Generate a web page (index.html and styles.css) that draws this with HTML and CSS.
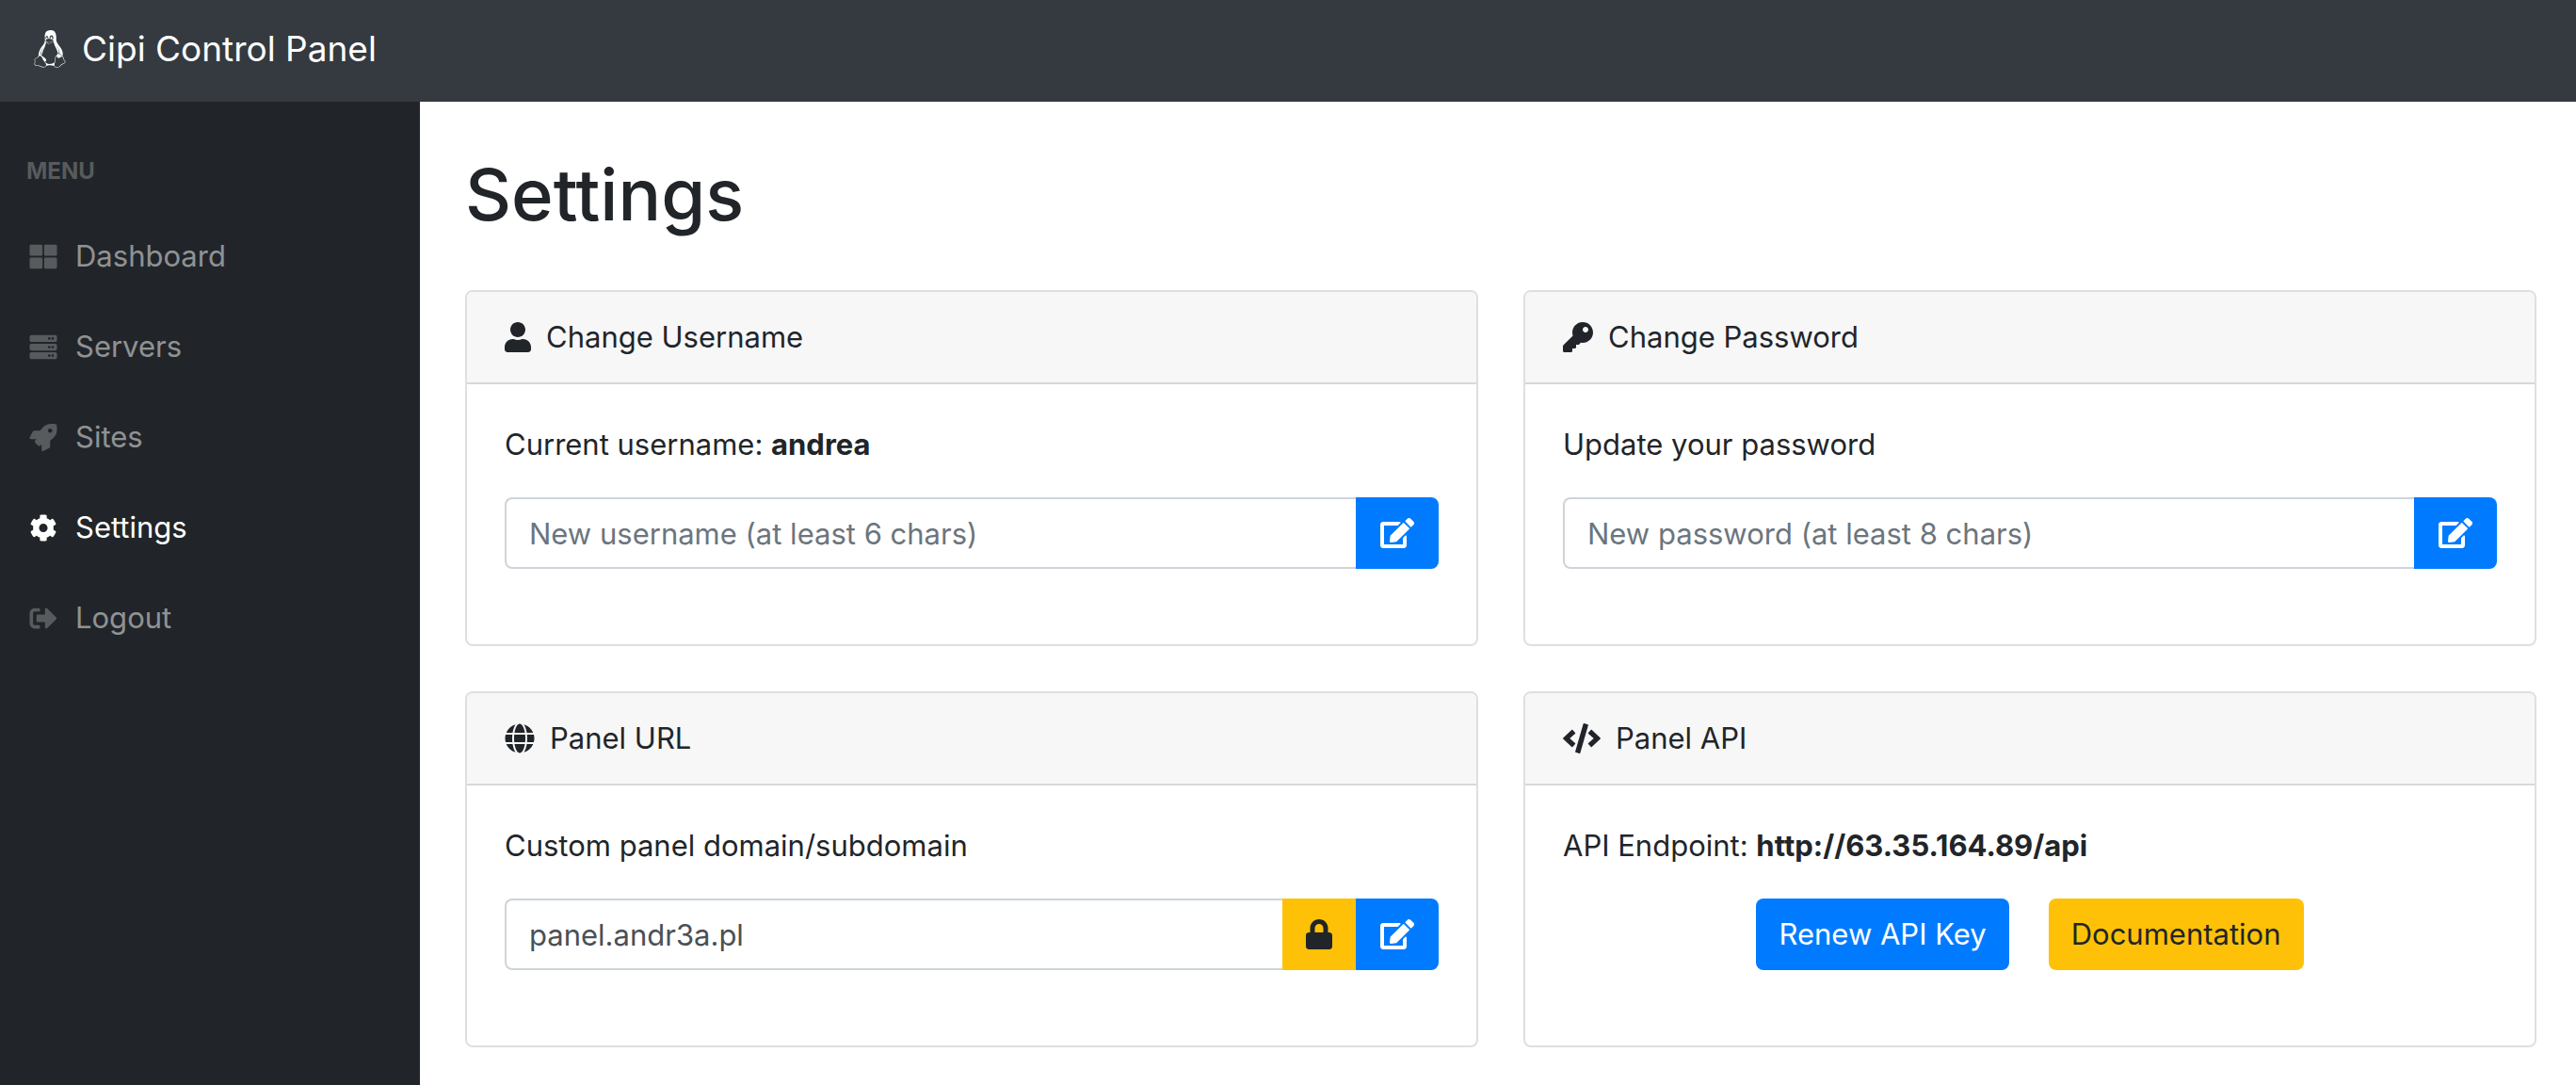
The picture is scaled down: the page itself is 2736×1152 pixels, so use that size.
FILE: index.html
```html
<!DOCTYPE html>
<html lang="en">
<head>
    <meta charset="UTF-8">
    <meta name="viewport" content="width=device-width, initial-scale=1.0">
    <title>Cipi Control Panel</title>
    <link rel="stylesheet" href="styles.css">
</head>
<body>
    <!-- Icons -->
    <svg class="sprite" aria-hidden="true">
        <symbol id="linux" viewBox="0 0 448 512"><path fill-rule="evenodd" d="M220.8 123.3c1 .5 1.8 1.7 3 1.7 1.1 0 2.8-.4 2.9-1.5.2-1.4-1.9-2.3-3.2-2.9-1.7-.7-3.9-1-5.5-.1-.4.2-.8.7-.6 1.1.3 1.3 2.3 1.1 3.4 1.7zm-21.9 1.7c1.2 0 2-1.2 3-1.7 1.1-.6 3.1-.4 3.5-1.6.2-.4-.2-.9-.6-1.1-1.6-.9-3.8-.6-5.5.1-1.3.6-3.4 1.5-3.2 2.9.1 1 1.8 1.5 2.8 1.4zM420 403.8c-3.6-4-5.3-11.6-7.2-19.7-1.8-8.1-3.9-16.8-10.5-22.4-1.3-1.1-2.6-2.1-4-2.9-1.3-.8-2.7-1.5-4.1-2 9.2-27.3 5.6-54.5-3.7-79.1-11.4-30.1-31.3-56.4-46.5-74.4-17.1-21.5-33.7-41.9-33.4-72C311.1 85.4 315.7.1 234.8 0 132.4-.2 158 103.4 156.9 135.2c-1.7 23.4-6.4 41.8-22.5 64.7-18.9 22.5-45.5 58.8-58.1 96.7-6 17.9-8.8 36.1-6.2 53.3-6.5 5.8-11.4 14.7-16.6 20.2-4.2 4.3-10.3 5.9-17 8.3s-14 6-18.5 14.5c-2.1 3.9-2.8 8.1-2.8 12.4 0 3.9.6 7.9 1.2 11.8 1.2 8.1 2.5 15.7.8 20.8-5.2 14.4-5.9 24.4-2.2 31.7 3.8 7.3 11.4 10.5 20.1 12.3 17.3 3.6 40.8 2.7 59.3 12.5 19.8 10.4 39.9 14.1 55.9 10.4 11.6-2.6 21.1-9.6 25.9-20.2 12.5-.1 26.3-5.4 48.3-6.6 14.9-1.2 33.6 5.3 55.1 4.1.6 2.3 1.4 4.6 2.5 6.7v.1c8.3 16.7 23.8 24.3 40.3 23 16.6-1.3 34.1-11 48.3-27.9 13.6-16.4 36-23.2 50.9-32.2 7.4-4.5 13.4-10.1 13.9-18.3.4-8.2-4.4-17.3-15.5-29.7zM223.7 87.3c9.8-22.2 34.2-21.8 44-.4 6.5 14.2 3.6 30.9-4.3 40.4-1.6-.8-5.9-2.6-12.6-4.9 1.1-1.2 3.1-2.7 3.9-4.6 4.8-11.8-.2-27-9.1-27.3-7.3-.5-13.9 10.8-11.8 23-4.1-2-9.4-3.5-13-4.4-1-6.9-.3-14.6 2.9-21.8zM183 75.8c10.1 0 20.8 14.2 19.1 33.5-3.5 1-7.1 2.5-10.2 4.6 1.2-8.9-3.3-20.1-9.6-19.6-8.4.7-9.8 21.2-1.8 28.1 1 .8 1.9-.2-5.9 5.5-15.6-14.6-10.5-52.1 8.4-52.1zm-13.6 60.7c6.2-4.6 13.6-10 14.1-10.5 4.7-4.4 13.5-14.2 27.9-14.2 7.1 0 15.6 2.3 25.9 8.9 6.3 4.1 11.3 4.4 22.6 9.3 8.4 3.5 13.7 9.7 10.5 18.2-2.6 7.1-11 14.4-22.7 18.1-11.1 3.6-19.8 16-38.2 14.9-3.9-.2-7-1-9.6-2.1-8-3.5-12.2-10.4-20-15-8.6-4.8-13.2-10.4-14.7-15.3-1.4-4.9 0-9 4.2-12.3zm3.3 334c-2.7 35.1-43.9 34.4-75.3 18-29.9-15.8-68.6-6.5-76.5-21.9-2.4-4.7-2.4-12.7 2.6-26.4v-.2c2.4-7.6.6-16-.6-23.9-1.2-7.8-1.8-15 .9-20 3.5-6.7 8.5-9.1 14.8-11.3 10.3-3.7 11.8-3.4 19.6-9.9 5.5-5.7 9.5-12.9 14.3-18 5.1-5.5 10-8.1 17.7-6.9 8.1 1.2 15.1 6.8 21.9 16l19.6 35.6c9.5 19.9 43.1 48.4 41 68.9zm-1.4-25.9c-4.1-6.6-9.6-13.6-14.4-19.6 7.1 0 14.2-2.2 16.7-8.9 2.3-6.2 0-14.9-7.4-24.9-13.5-18.2-38.3-32.5-38.3-32.5-13.5-8.4-21.1-18.7-24.6-29.9s-3-23.3-.3-35.2c5.2-22.9 18.6-45.2 27.2-59.2 2.3-1.7.8 3.2-8.7 20.8-8.5 16.1-24.4 53.3-2.6 82.4.6-20.7 5.5-41.8 13.8-61.5 12-27.4 37.3-74.9 39.3-112.7 1.1.8 4.6 3.2 6.2 4.1 4.6 2.7 8.1 6.7 12.6 10.3 12.4 10 28.5 9.2 42.4 1.2 6.2-3.5 11.2-7.5 15.9-9 9.9-3.1 17.8-8.6 22.3-15 7.7 30.4 25.7 74.3 37.2 95.7 6.1 11.4 18.3 35.5 23.6 64.6 3.3-.1 7 .4 10.9 1.4 13.8-35.7-11.7-74.2-23.3-84.9-4.7-4.6-4.9-6.6-2.6-6.5 12.6 11.2 29.2 33.7 35.2 59 2.8 11.6 3.3 23.7.4 35.7 16.4 6.8 35.9 17.9 30.7 34.8-2.2-.1-3.2 0-4.2 0 3.2-10.1-3.9-17.6-22.8-26.1-19.6-8.6-36-8.6-38.3 12.5-12.1 4.2-18.3 14.7-21.4 27.3-2.8 11.2-3.6 24.7-4.4 39.9-.5 7.7-3.6 18-6.8 29-32.1 22.9-76.7 32.9-114.3 7.2zm257.4-11.5c-.9 16.8-41.2 19.9-63.2 46.5-13.2 15.7-29.4 24.4-43.6 25.5s-26.5-4.8-33.7-19.3c-4.7-11.1-2.4-23.1 1.1-36.3 3.7-14.2 9.2-28.8 9.9-40.6.8-15.2 1.7-28.5 4.2-38.7 2.6-10.3 6.6-17.2 13.7-21.1.3-.2.7-.3 1-.5.8 13.2 7.3 26.6 18.8 29.5 12.6 3.3 30.7-7.5 38.4-16.3 9-.3 15.7-.9 22.6 5.1 9.9 8.5 7.1 30.3 17.1 41.6 10.6 11.6 14 19.5 13.7 24.6zM173.3 148.7c2 1.9 4.7 4.5 8 7.1 6.6 5.2 15.8 10.6 27.3 10.6 11.6 0 22.5-5.9 31.8-10.8 4.9-2.6 10.9-7 14.8-10.4s5.9-6.3 3.1-6.6-2.6 2.6-6 5.1c-4.4 3.2-9.7 7.4-13.9 9.8-7.4 4.2-19.5 10.2-29.9 10.2s-18.7-4.8-24.9-9.7c-3.1-2.5-5.7-5-7.7-6.9-1.5-1.4-1.9-4.6-4.3-4.9-1.4-.1-1.8 3.7 1.7 6.5z"/></symbol>
        <symbol id="th-large" viewBox="0 0 512 512"><path d="M296 32h192c13.255 0 24 10.745 24 24v160c0 13.255-10.745 24-24 24H296c-13.255 0-24-10.745-24-24V56c0-13.255 10.745-24 24-24zm-80 0H24C10.745 32 0 42.745 0 56v160c0 13.255 10.745 24 24 24h192c13.255 0 24-10.745 24-24V56c0-13.255-10.745-24-24-24zM0 296v160c0 13.255 10.745 24 24 24h192c13.255 0 24-10.745 24-24V296c0-13.255-10.745-24-24-24H24c-13.255 0-24 10.745-24 24zm296 184h192c13.255 0 24-10.745 24-24V296c0-13.255-10.745-24-24-24H296c-13.255 0-24 10.745-24 24v160c0 13.255 10.745 24 24 24z"/></symbol>
        <symbol id="server" viewBox="0 0 512 512"><path fill-rule="evenodd" d="M480 160H32c-17.673 0-32-14.327-32-32V64c0-17.673 14.327-32 32-32h448c17.673 0 32 14.327 32 32v64c0 17.673-14.327 32-32 32zm-48-88c-13.255 0-24 10.745-24 24s10.745 24 24 24 24-10.745 24-24-10.745-24-24-24zm-64 0c-13.255 0-24 10.745-24 24s10.745 24 24 24 24-10.745 24-24-10.745-24-24-24zm112 248H32c-17.673 0-32-14.327-32-32v-64c0-17.673 14.327-32 32-32h448c17.673 0 32 14.327 32 32v64c0 17.673-14.327 32-32 32zm-48-88c-13.255 0-24 10.745-24 24s10.745 24 24 24 24-10.745 24-24-10.745-24-24-24zm-64 0c-13.255 0-24 10.745-24 24s10.745 24 24 24 24-10.745 24-24-10.745-24-24-24zm112 248H32c-17.673 0-32-14.327-32-32v-64c0-17.673 14.327-32 32-32h448c17.673 0 32 14.327 32 32v64c0 17.673-14.327 32-32 32zm-48-88c-13.255 0-24 10.745-24 24s10.745 24 24 24 24-10.745 24-24-10.745-24-24-24zm-64 0c-13.255 0-24 10.745-24 24s10.745 24 24 24 24-10.745 24-24-10.745-24-24-24z"/></symbol>
        <symbol id="rocket" viewBox="0 0 512 512"><path fill-rule="evenodd" d="M505.12 19.094c-1.19-5.532-6.658-11-12.207-12.188C460.716 0 435.507 0 410.407 0 307.175 0 245.27 55.203 199.052 128H94.838c-16.348.016-35.557 11.875-42.887 26.484L2.516 253.297A28.4 28.4 0 0 0 0 264a24.009 24.009 0 0 0 24.006 24h103.81l-22.474 22.469c-11.366 11.36-12.996 32.258 0 45.25l50.904 50.906c11.156 11.188 32.156 13.156 45.277 0l22.475-22.469V488a24.009 24.009 0 0 0 24.006 24 28.56 28.56 0 0 0 10.707-2.516l98.728-49.39c14.629-7.297 26.508-26.5 26.508-42.86V312.797c72.598-46.313 128.035-108.406 128.035-211.094.093-25.203.093-50.406-6.862-82.61zM384.04 168A40 40 0 1 1 424.05 128 40.023 40.023 0 0 1 384.04 168z"/></symbol>
        <symbol id="cog" viewBox="0 0 512 512"><path d="M487.4 315.7l-42.6-24.6c4.3-23.2 4.3-47 0-70.2l42.6-24.6c4.9-2.8 7.1-8.6 5.5-14-11.1-35.6-30-67.8-54.7-94.6-3.8-4.1-10-5.1-14.8-2.3L380.8 110c-17.9-15.4-38.5-27.3-60.8-35.1V25.8c0-5.6-3.9-10.5-9.4-11.7-36.7-8.2-74.3-7.8-109.2 0-5.5 1.2-9.4 6.1-9.4 11.7V75c-22.2 7.9-42.8 19.8-60.8 35.1L88.7 85.5c-4.9-2.8-11-1.9-14.8 2.3-24.7 26.7-43.6 58.9-54.7 94.6-1.7 5.4.6 11.2 5.5 14L67.3 221c-4.3 23.2-4.3 47 0 70.2l-42.6 24.6c-4.9 2.8-7.1 8.6-5.5 14 11.1 35.6 30 67.8 54.7 94.6 3.8 4.1 10 5.1 14.8 2.3l42.6-24.6c17.9 15.4 38.5 27.3 60.8 35.1v49.2c0 5.6 3.9 10.5 9.4 11.7 36.7 8.2 74.3 7.8 109.2 0 5.5-1.2 9.4-6.1 9.4-11.7v-49.2c22.2-7.9 42.8-19.8 60.8-35.1l42.6 24.6c4.9 2.8 11 1.9 14.8-2.3 24.7-26.7 43.6-58.9 54.7-94.6 1.5-5.5-.7-11.3-5.6-14.1zM256 336c-44.1 0-80-35.9-80-80s35.9-80 80-80 80 35.9 80 80-35.9 80-80 80z"/></symbol>
        <symbol id="sign-out" viewBox="0 0 512 512"><path d="M497 273L329 441c-15 15-41 4.5-41-17v-96H152c-13.3 0-24-10.7-24-24v-96c0-13.3 10.7-24 24-24h136V88c0-21.4 25.9-32 41-17l168 168c9.3 9.4 9.3 24.6 0 34zM192 436v-40c0-6.6-5.4-12-12-12H96c-17.7 0-32-14.3-32-32V160c0-17.7 14.3-32 32-32h84c6.6 0 12-5.4 12-12V76c0-6.6-5.4-12-12-12H96c-53 0-96 43-96 96v192c0 53 43 96 96 96h84c6.6 0 12-5.4 12-12z"/></symbol>
        <symbol id="user" viewBox="0 0 448 512"><path d="M224 256c70.7 0 128-57.3 128-128S294.7 0 224 0 96 57.3 96 128s57.3 128 128 128zm89.6 32h-16.7c-22.2 10.2-46.9 16-72.9 16s-50.6-5.8-72.9-16h-16.7C60.2 288 0 348.2 0 422.4V464c0 26.5 21.5 48 48 48h352c26.5 0 48-21.5 48-48v-41.6c0-74.2-60.2-134.4-134.4-134.4z"/></symbol>
        <symbol id="key" viewBox="0 0 512 512"><path fill-rule="evenodd" d="M512 176.001C512 273.203 433.202 352 336 352c-11.22 0-22.19-1.062-32.827-3.069l-24.012 27.014A23.999 23.999 0 0 1 261.223 384H224v40c0 13.255-10.745 24-24 24h-40v40c0 13.255-10.745 24-24 24H24c-13.255 0-24-10.745-24-24v-78.059c0-6.365 2.529-12.47 7.029-16.971l161.802-161.802C163.108 213.814 160 195.271 160 176 160 78.798 238.797.001 335.999 0 433.488-.001 512 78.511 512 176.001zM336 128c0 26.51 21.49 48 48 48s48-21.49 48-48-21.49-48-48-48-48 21.49-48 48z"/></symbol>
        <symbol id="globe" viewBox="0 0 496 512"><path d="M336.5 160C322 70.7 287.8 8 248 8s-74 62.7-88.5 152h177zM152 256c0 22.2 1.2 43.5 3.3 64h185.3c2.1-20.5 3.3-41.8 3.3-64s-1.2-43.5-3.3-64H155.3c-2.1 20.5-3.3 41.8-3.3 64zm324.7-96c-28.6-67.9-86.5-120.4-158-141.6 24.4 33.8 41.2 84.7 50 141.6h108zM177.2 18.4C105.8 39.6 47.8 92.1 19.3 160h108c8.7-56.9 25.5-107.8 49.9-141.6zM487.4 192H372.7c2.1 21 3.3 42.5 3.3 64s-1.2 43-3.3 64h114.6c5.5-20.5 8.6-41.8 8.6-64s-3.1-43.5-8.5-64zM120 256c0-21.5 1.2-43 3.3-64H8.6C3.2 212.5 0 233.8 0 256s3.2 43.5 8.6 64h114.6c-2-21-3.2-42.5-3.2-64zm39.5 96c14.5 89.3 48.7 152 88.5 152s74-62.7 88.5-152h-177zm159.3 141.6c71.4-21.2 129.4-73.7 158-141.6h-108c-8.8 56.9-25.6 107.8-50 141.6zM19.3 352c28.6 67.9 86.5 120.4 158 141.6-24.4-33.8-41.2-84.7-50-141.6h-108z"/></symbol>
        <symbol id="code" viewBox="0 0 640 512"><path d="M278.9 511.5l-61-17.7c-6.4-1.8-10-8.5-8.2-14.9L346.2 8.7c1.8-6.4 8.5-10 14.9-8.2l61 17.7c6.4 1.8 10 8.5 8.2 14.9L293.8 503.3c-1.9 6.4-8.5 10.1-14.9 8.2zm-114-112.2l43.5-46.4c4.6-4.9 4.3-12.7-.8-17.2L117 256l90.6-79.7c5.1-4.5 5.5-12.3.8-17.2l-43.5-46.4c-4.5-4.8-12.1-5.1-17-.5L3.8 247.2c-5.1 4.7-5.1 12.8 0 17.5l144.1 135.1c4.9 4.6 12.5 4.4 17-.5zm327.2.6l144.1-135.1c5.1-4.7 5.1-12.8 0-17.5L492.1 112.1c-4.8-4.5-12.4-4.3-17 .5L431.6 159c-4.6 4.9-4.3 12.7.8 17.2L523 256l-90.6 79.7c-5.1 4.5-5.5 12.3-.8 17.2l43.5 46.4c4.5 4.9 12.1 5.1 17 .6z"/></symbol>
        <symbol id="lock" viewBox="0 0 448 512"><path fill-rule="evenodd" d="M400 224h-24v-72C376 68.2 307.8 0 224 0S72 68.2 72 152v72H48c-26.5 0-48 21.5-48 48v192c0 26.5 21.5 48 48 48h352c26.5 0 48-21.5 48-48V272c0-26.5-21.5-48-48-48zm-104 0H152v-72c0-39.7 32.3-72 72-72s72 32.3 72 72v72z"/></symbol>
        <symbol id="edit" viewBox="0 0 576 512"><path d="M402.6 83.2l90.2 90.2c3.8 3.8 3.8 10 0 13.8L274.4 405.6l-92.8 10.3c-12.4 1.4-22.9-9.1-21.5-21.5l10.3-92.8L388.8 83.2c3.8-3.8 10-3.8 13.8 0zm162-22.9l-48.8-48.8c-15.2-15.2-39.9-15.2-55.2 0l-35.4 35.4c-3.8 3.8-3.8 10 0 13.8l90.2 90.2c3.8 3.8 10 3.8 13.8 0l35.4-35.4c15.2-15.3 15.2-40 0-55.2zM384 346.2V448H64V128h229.8c3.2 0 6.2-1.3 8.5-3.5l40-40c7.6-7.6 2.2-20.5-8.5-20.5H48C21.5 64 0 85.5 0 112v352c0 26.5 21.5 48 48 48h352c26.5 0 48-21.5 48-48V306.2c0-10.7-12.9-16-20.5-8.5l-40 40c-2.2 2.3-3.5 5.3-3.5 8.5z"/></symbol>
    </svg>

    <header class="topnav">
        <a class="brand" href="#">
            <svg class="brand-icon"><use href="#linux"/></svg>
            Cipi Control Panel
        </a>
    </header>
    <div class="layout">
        <nav class="sidenav">
            <div class="sidenav-heading">MENU</div>
            <a class="nav-link" href="#"><svg class="nav-icon"><use href="#th-large"/></svg>Dashboard</a>
            <a class="nav-link" href="#"><svg class="nav-icon"><use href="#server"/></svg>Servers</a>
            <a class="nav-link" href="#"><svg class="nav-icon"><use href="#rocket"/></svg>Sites</a>
            <a class="nav-link active" href="#"><svg class="nav-icon"><use href="#cog"/></svg>Settings</a>
            <a class="nav-link" href="#"><svg class="nav-icon"><use href="#sign-out"/></svg>Logout</a>
        </nav>
        <main>
            <h1>Settings</h1>
            <div class="cards">
                <section class="card">
                    <h2 class="card-header"><svg class="icon icon-narrow"><use href="#user"/></svg>Change Username</h2>
                    <div class="card-body">
                        <label class="card-text" for="username">Current username: <b>andrea</b></label>
                        <div class="input-group">
                            <input type="text" id="username" placeholder="New username (at least 6 chars)">
                            <button class="btn btn-primary btn-edit" aria-label="Update username"><svg class="icon icon-edit"><use href="#edit"/></svg></button>
                        </div>
                    </div>
                </section>
                <section class="card">
                    <h2 class="card-header"><svg class="icon"><use href="#key"/></svg>Change Password</h2>
                    <div class="card-body">
                        <label class="card-text" for="password">Update your password</label>
                        <div class="input-group">
                            <input type="password" id="password" placeholder="New password (at least 8 chars)">
                            <button class="btn btn-primary btn-edit" aria-label="Update password"><svg class="icon icon-edit"><use href="#edit"/></svg></button>
                        </div>
                    </div>
                </section>
                <section class="card">
                    <h2 class="card-header"><svg class="icon"><use href="#globe"/></svg>Panel URL</h2>
                    <div class="card-body">
                        <label class="card-text" for="domain">Custom panel domain/subdomain</label>
                        <div class="input-group">
                            <input type="text" id="domain" value="panel.andr3a.pl">
                            <button class="btn btn-warning btn-lock" aria-label="Require SSL"><svg class="icon icon-narrow"><use href="#lock"/></svg></button>
                            <button class="btn btn-primary btn-edit" aria-label="Update domain"><svg class="icon icon-edit"><use href="#edit"/></svg></button>
                        </div>
                    </div>
                </section>
                <section class="card">
                    <h2 class="card-header"><svg class="icon icon-wide"><use href="#code"/></svg>Panel API</h2>
                    <div class="card-body">
                        <p class="card-text">API Endpoint: <b>http://63.35.164.89/api</b></p>
                        <div class="btn-row">
                            <button class="btn btn-primary">Renew API Key</button>
                            <a class="btn btn-warning" href="#">Documentation</a>
                        </div>
                    </div>
                </section>
            </div>
        </main>
    </div>
</body>
</html>
```

FILE: styles.css
```css
* {
    box-sizing: border-box;
}

body {
    font-family: Inter, "Liberation Sans", sans-serif;
    font-size: 31px;
    line-height: 48px;
    color: #212529;
    background-color: #fff;
    margin: 0;
    min-height: 100vh;
    display: flex;
    flex-direction: column;
}

a {
    text-decoration: none;
}

svg {
    fill: currentColor;
    flex-shrink: 0;
}

.sprite {
    display: none;
}

.topnav {
    display: flex;
    align-items: center;
    height: 108px;
    padding: 0 35px;
    background-color: #343a40;
}

.brand {
    display: flex;
    align-items: center;
    gap: 16px;
    padding-bottom: 4px;
    font-size: 37px;
    color: #fff;
}

.brand-icon {
    width: 36px;
    height: 40px;
}

.layout {
    display: flex;
    flex: 1;
}

.sidenav {
    flex: 0 0 446px;
    background-color: #212529;
}

.sidenav-heading {
    padding: 56px 28px 24px;
    font-size: 24px;
    line-height: 36px;
    font-weight: bold;
    color: rgba(255, 255, 255, 0.25);
}

.nav-link {
    display: flex;
    align-items: center;
    gap: 19px;
    padding: 24px 31px;
    color: rgba(255, 255, 255, 0.5);
}

.nav-icon {
    width: 30px;
    height: 29px;
    color: rgba(255, 255, 255, 0.25);
}

.nav-link.active,
.nav-link.active .nav-icon {
    color: #fff;
}

main {
    flex: 1;
    padding: 50px 42px 40px 48px;
}

h1 {
    margin: 0 0 54px;
    font-size: 76px;
    line-height: 96px;
    font-weight: 500;
}

.cards {
    display: grid;
    grid-template-columns: 1fr 1fr;
    gap: 48px;
}

.card {
    border: 2px solid #dfdfdf;
    border-radius: 8px;
    overflow: hidden;
}

.card-header {
    display: flex;
    align-items: center;
    gap: 16px;
    margin: 0;
    padding: 24px 40px;
    font-size: 31px;
    font-weight: normal;
    background-color: #f7f7f7;
    border-bottom: 2px solid #d8d8d8;
}

.card-body {
    padding: 40px 40px 80px;
}

.card-text {
    display: block;
    margin: 0 0 32px;
}

.icon {
    width: 32px;
    height: 32px;
}

.icon-narrow {
    width: 28px;
}

.icon-edit {
    width: 36px;
}

.icon-wide {
    width: 40px;
}

.input-group {
    display: flex;
}

input {
    flex: 1;
    min-width: 0;
    height: 76px;
    padding: 0 24px;
    font: inherit;
    color: #495057;
    background-color: #fff;
    border: 2px solid #ced4da;
    border-right: 0;
    border-radius: 8px 0 0 8px;
}

input::placeholder {
    color: #6c757d;
    opacity: 1;
}

.btn {
    display: flex;
    align-items: center;
    justify-content: center;
    height: 76px;
    padding: 0 24px;
    font: inherit;
    border: none;
    border-radius: 8px;
    cursor: pointer;
}

.btn-primary {
    color: #fff;
    background-color: #007bff;
}

.btn-warning {
    color: #212529;
    background-color: #ffc107;
}

.btn-edit {
    width: 88px;
    border-radius: 0 8px 8px 0;
}

.btn-lock {
    width: 78px;
    border-radius: 0;
}

.btn-row {
    display: flex;
    justify-content: center;
    gap: 42px;
}
```
